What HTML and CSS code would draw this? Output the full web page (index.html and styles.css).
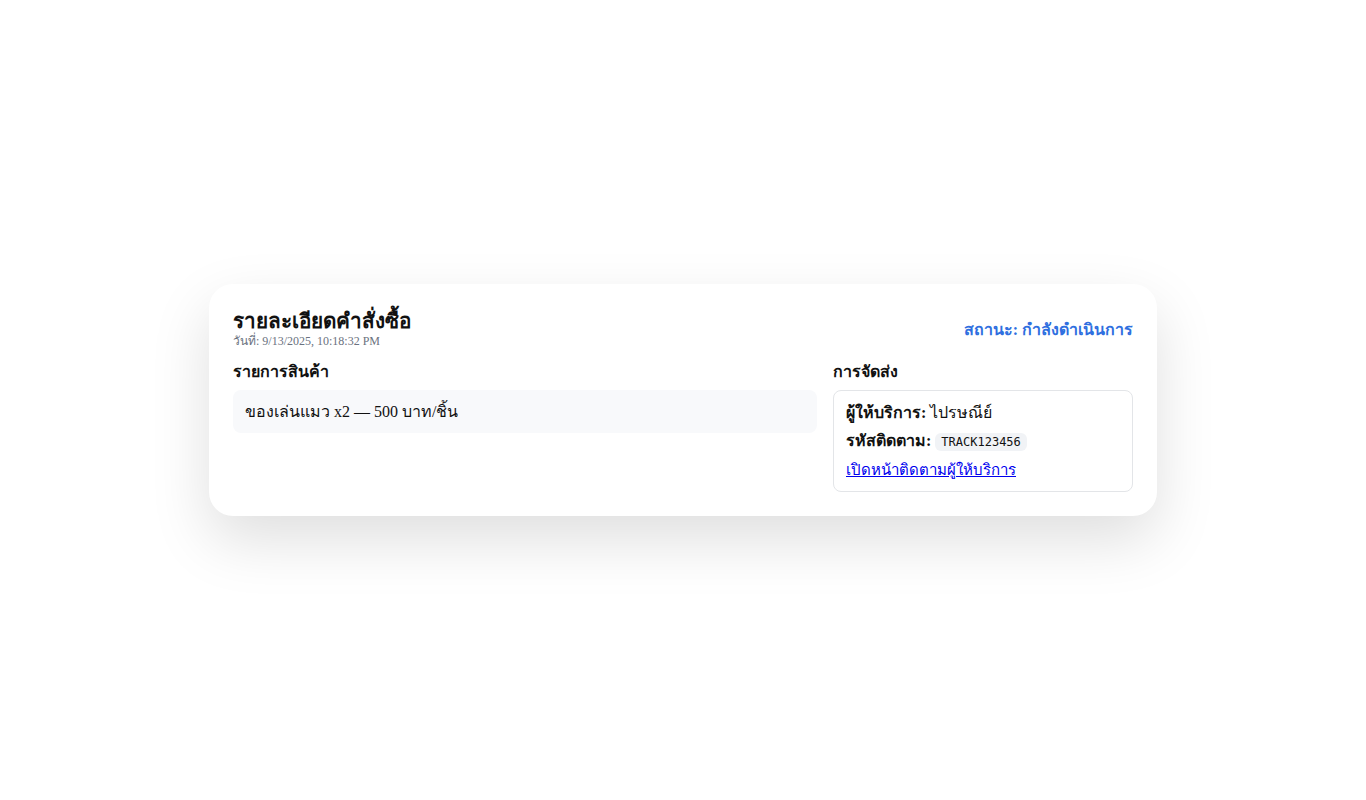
FILE: index.html
```html
<!DOCTYPE html>
<html lang="th">
<head>
<meta charset="utf-8">
<title>รายละเอียดคำสั่งซื้อ</title>
<link rel="stylesheet" href="styles.css">
</head>
<body>
<div class="page">
  <div class="card">
    <div class="card-header">
      <div class="title-block">
        <h2 class="title">รายละเอียดคำสั่งซื้อ</h2>
        <div class="date">วันที่: 9/13/2025, 10:18:32 PM</div>
      </div>
      <div class="status">สถานะ: กำลังดำเนินการ</div>
    </div>
    <div class="card-body">
      <section class="items">
        <h3 class="section-title">รายการสินค้า</h3>
        <div class="item">ของเล่นแมว x2 — 500 บาท/ชิ้น</div>
      </section>
      <section class="shipping">
        <h3 class="section-title">การจัดส่ง</h3>
        <div class="ship-box">
          <div class="ship-line"><strong>ผู้ให้บริการ:</strong> ไปรษณีย์</div>
          <div class="ship-line"><strong>รหัสติดตาม:</strong> <code class="code">TRACK123456</code></div>
          <div class="ship-line"><a href="#" class="link">เปิดหน้าติดตามผู้ให้บริการ</a></div>
        </div>
      </section>
    </div>
  </div>
</div>
</body>
</html>
```

FILE: styles.css
```css
html, body {
  margin: 0;
  padding: 0;
  background: #ffffff;
}
body {
  font-family: "Liberation Serif", "Noto Sans", serif;
  font-size: 16px;
  color: #111;
}
.page {
  min-height: 100vh;
  display: flex;
  justify-content: center;
  align-items: center;
}
.card {
  width: 948px;
  box-sizing: border-box;
  padding: 24px;
  background: #fff;
  border-radius: 24px;
  box-shadow: 0 24px 60px rgba(0,0,0,0.13);
}
.card-header {
  display: flex;
  justify-content: space-between;
  align-items: center;
}
.title {
  margin: 0;
  font-size: 20.7px;
  font-weight: 700;
  line-height: 26px;
  color: #111;
}
.date {
  font-size: 12px;
  line-height: 14px;
  color: #6b7280;
}
.status {
  font-size: 16px;
  font-weight: 700;
  color: #2f6fe0;
  padding-top: 3px;
}
.card-body {
  display: grid;
  grid-template-columns: 1fr 300px;
  gap: 16px;
  margin-top: 14px;
}
.section-title {
  margin: 0 0 8px;
  font-size: 16px;
  font-weight: 700;
  line-height: 20px;
}
.item {
  background: #f8f9fb;
  border-radius: 8px;
  padding: 12px;
  line-height: 19px;
}
.ship-box {
  border: 1px solid #e3e5e8;
  border-radius: 8px;
  padding: 8px 12px 7px;
}
.ship-line {
  line-height: 28px;
}
.code {
  font-family: "DejaVu Sans Mono", monospace;
  font-size: 12px;
  background: #f1f3f6;
  border-radius: 6px;
  padding: 2px 6px;
  color: #111;
}
.link {
  color: #0000ee;
  font-size: 15px;
}
```
